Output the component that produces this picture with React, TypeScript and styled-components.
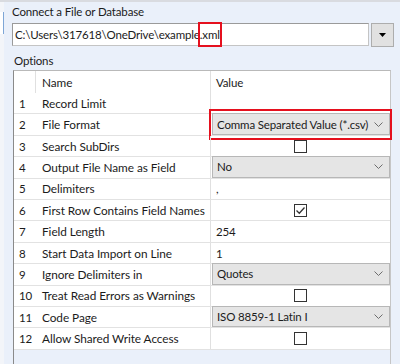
import React from "react";
import styled, { createGlobalStyle } from "styled-components";

const Global = createGlobalStyle`
  html, body { margin: 0; padding: 0; }
  body { width: 400px; height: 364px; overflow: hidden; background: #eaf0fa; }
`;

const FONT = `"Lato", "Liberation Sans", Arial, sans-serif`;

const Page = styled.div`
  width: 400px;
  height: 364px;
  background: #eaf0fa;
  font-family: ${FONT};
  font-size: 11.5px;
  letter-spacing: -0.15px;
  color: #1b1b1b;
  display: flex;
  flex-direction: column;
  overflow: hidden;
`;

const TopStrip = styled.div`
  height: 2px;
  background: #d9dbe0;
  flex: none;
`;

const Body = styled.div`
  flex: 1;
  display: flex;
  min-height: 0;
`;

const LeftEdge = styled.div`
  width: 4px;
  flex: none;
  background: #f3f5f9;
  display: flex;
  flex-direction: column;
`;

const EdgeWidget = styled.div`
  margin-top: 10px;
  height: 22px;
  border-right: 1px solid #7ea6d6;
  background: #ffffff;
`;

const Content = styled.div`
  flex: 1;
  padding-left: 8px;
  display: flex;
  flex-direction: column;
  min-width: 0;
`;

const Label = styled.div<{ $mt: number; $ml?: number }>`
  margin-top: ${(p) => p.$mt}px;
  margin-left: ${(p) => p.$ml ?? 0}px;
  line-height: 16px;
  height: 16px;
  white-space: nowrap;
`;

const PathRow = styled.div`
  margin-top: 3px;
  display: flex;
  gap: 2px;
  height: 24px;
`;

const PathInput = styled.div`
  box-sizing: border-box;
  width: 357px;
  height: 23px;
  border: 1px solid #9a9a9a;
  border-right-color: #c4c4c4;
  border-bottom-color: #c4c4c4;
  background: #fff;
  padding-left: 2px;
  line-height: 21px;
  white-space: nowrap;
`;

const Marked = styled.span`
  position: relative;
  display: inline-block;
  line-height: 21px;
  &::after {
    content: "";
    position: absolute;
    left: -2px;
    right: -2px;
    top: -2px;
    bottom: -2px;
    border: 2px solid #e5101e;
  }
`;

const DropButton = styled.div`
  box-sizing: border-box;
  width: 23px;
  height: 24px;
  background: #e1e1e1;
  border: 1px solid #adadad;
  display: flex;
  align-items: center;
  justify-content: center;
`;

const Grid = styled.div`
  margin-top: 1px;
  margin-left: 1px;
  width: 378px;
  flex: 1;
  box-sizing: border-box;
  border-left: 1px solid #8a8a8a;
  border-top: 1px solid #b9b9b9;
  border-right: 1px solid #c6c6c6;
  background: #eaf0fa;
`;

const RowBase = styled.div<{ $h: string; $header?: boolean }>`
  display: grid;
  grid-template-columns: 22px 175px 1fr;
  height: ${(p) => p.$h};
  box-sizing: border-box;
  background: #fff;
  border-bottom: ${(p) => (p.$header ? "none" : "1px solid #e2e2e2")};
`;

const Cell = styled.div<{ $pad: number; $divider?: boolean }>`
  position: relative;
  padding-left: ${(p) => p.$pad}px;
  display: flex;
  align-items: center;
  white-space: nowrap;
  overflow: hidden;
  border-right: ${(p) => (p.$divider ? "1px solid #e0e0e0" : "none")};
  min-width: 0;
`;

const NameCell = styled(Cell)`
  font-size: 11.8px;
  letter-spacing: -0.05px;
`;

const ValueCell = styled.div<{ $center?: boolean }>`
  position: relative;
  display: flex;
  align-items: center;
  justify-content: ${(p) => (p.$center ? "center" : "flex-start")};
  padding-left: ${(p) => (p.$center ? 0 : 5)}px;
  white-space: nowrap;
`;

const Select = styled.div`
  position: absolute;
  left: 1px;
  right: 0px;
  top: -1px;
  bottom: 0px;
  box-sizing: border-box;
  background: #e5e5e5;
  border: 1px solid #b7b7b7;
  display: flex;
  align-items: center;
  justify-content: space-between;
  padding-left: 4px;
  padding-right: 6px;
`;

const Annotation = styled.div`
  position: absolute;
  left: -2px;
  right: -2px;
  top: -5px;
  bottom: -5px;
  border: 2px solid #e5101e;
  pointer-events: none;
`;

const Check = styled.div`
  box-sizing: border-box;
  width: 13px;
  height: 13px;
  border: 1px solid #333;
  background: #fff;
  display: flex;
  align-items: center;
  justify-content: center;
`;

type Row = {
  name: string;
  kind: "empty" | "text" | "select" | "check";
  value?: string;
  checked?: boolean;
  mark?: boolean;
};

const rows: Row[] = [
  { name: "Record Limit", kind: "empty" },
  { name: "File Format", kind: "select", value: "Comma Separated Value (*.csv)", mark: true },
  { name: "Search SubDirs", kind: "check", checked: false },
  { name: "Output File Name as Field", kind: "select", value: "No" },
  { name: "Delimiters", kind: "text", value: "," },
  { name: "First Row Contains Field Names", kind: "check", checked: true },
  { name: "Field Length", kind: "text", value: "254" },
  { name: "Start Data Import on Line", kind: "text", value: "1" },
  { name: "Ignore Delimiters in", kind: "select", value: "Quotes" },
  { name: "Treat Read Errors as Warnings", kind: "check", checked: false },
  { name: "Code Page", kind: "select", value: "ISO 8859-1 Latin I" },
  { name: "Allow Shared Write Access", kind: "check", checked: false },
];

const Chevron = () => (
  <svg width="9" height="5" viewBox="0 0 9 5">
    <polyline points="0.5,0.5 4.5,4.5 8.5,0.5" fill="none" stroke="#6d6d6d" strokeWidth="1" />
  </svg>
);

const Triangle = () => (
  <svg width="7" height="4" viewBox="0 0 7 4">
    <polygon points="0,0 7,0 3.5,4" fill="#000" />
  </svg>
);

const Tick = () => (
  <svg width="11" height="11" viewBox="0 0 11 11">
    <polyline points="1.5,5.5 4.3,8.3 9.5,2.5" fill="none" stroke="#333" strokeWidth="1.3" />
  </svg>
);

function renderValue(r: Row) {
  if (r.kind === "select") {
    return (
      <ValueCell>
        <Select>
          <span>{r.value}</span>
          <Chevron />
        </Select>
        {r.mark && <Annotation />}
      </ValueCell>
    );
  }
  if (r.kind === "check") {
    return (
      <ValueCell $center>
        <Check>{r.checked && <Tick />}</Check>
      </ValueCell>
    );
  }
  return <ValueCell>{r.value ?? ""}</ValueCell>;
}

export default function App() {
  return (
    <Page>
      <Global />
      <TopStrip />
      <Body>
        <LeftEdge>
          <EdgeWidget />
        </LeftEdge>
        <Content>
          <Label $mt={2}>Connect a File or Database</Label>
          <PathRow>
            <PathInput>
              C:\Users\317618\OneDrive\example<Marked>.xml</Marked>
            </PathInput>
            <DropButton>
              <Triangle />
            </DropButton>
          </PathRow>
          <Label $mt={6} $ml={2}>Options</Label>
          <Grid>
            <RowBase $h="22px" $header>
              <Cell $pad={0} $divider />
              <NameCell $pad={6} $divider>Name</NameCell>
              <ValueCell>Value</ValueCell>
            </RowBase>
            {rows.map((r, i) => (
              <RowBase key={r.name} $h="21.42px">
                <Cell $pad={5}>{i + 1}</Cell>
                <NameCell $pad={6} $divider>{r.name}</NameCell>
                {renderValue(r)}
              </RowBase>
            ))}
          </Grid>
        </Content>
      </Body>
    </Page>
  );
}
